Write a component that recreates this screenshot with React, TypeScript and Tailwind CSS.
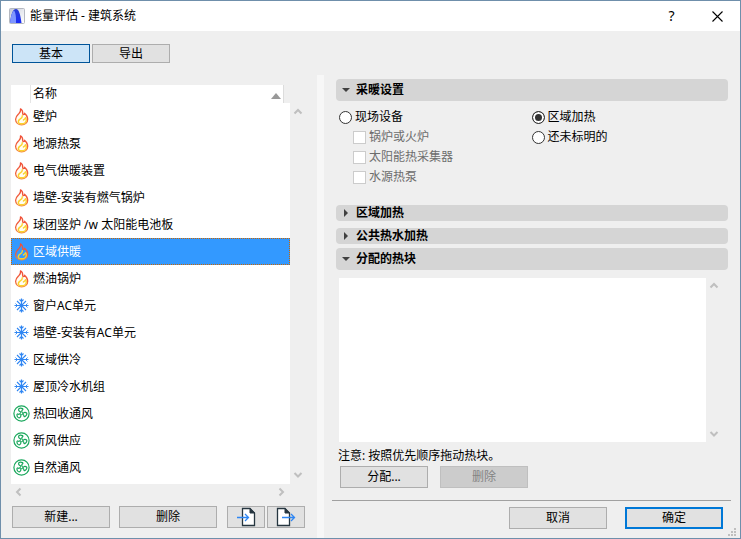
import type { ReactNode } from 'react';

type SystemKind = 'heating' | 'cooling' | 'ventilation';

const systems: { name: string; kind: SystemKind }[] = [
  { name: '壁炉', kind: 'heating' },
  { name: '地源热泵', kind: 'heating' },
  { name: '电气供暖装置', kind: 'heating' },
  { name: '墙壁-安装有燃气锅炉', kind: 'heating' },
  { name: '球团竖炉 /w 太阳能电池板', kind: 'heating' },
  { name: '区域供暖', kind: 'heating' },
  { name: '燃油锅炉', kind: 'heating' },
  { name: '窗户AC单元', kind: 'cooling' },
  { name: '墙壁-安装有AC单元', kind: 'cooling' },
  { name: '区域供冷', kind: 'cooling' },
  { name: '屋顶冷水机组', kind: 'cooling' },
  { name: '热回收通风', kind: 'ventilation' },
  { name: '新风供应', kind: 'ventilation' },
  { name: '自然通风', kind: 'ventilation' },
];

const selectedSystem = '区域供暖';

function AppIcon() {
  return (
    <svg width="16" height="16" viewBox="0 0 16 16" aria-hidden="true">
      <defs>
        <linearGradient id="app-bg" x1="0" y1="0" x2="1" y2="1">
          <stop offset="0" stopColor="#c2c8d4" />
          <stop offset="0.5" stopColor="#e6e8ee" />
          <stop offset="1" stopColor="#ffffff" />
        </linearGradient>
        <linearGradient id="app-arc" x1="0" y1="0" x2="0" y2="1">
          <stop offset="0" stopColor="#2a3fd6" />
          <stop offset="1" stopColor="#1a2cf5" />
        </linearGradient>
      </defs>
      <rect x="0.5" y="0.5" width="15" height="15" rx="1" fill="url(#app-bg)" stroke="#b4b8c0" />
      <path d="M1 15C2 7 3.500 1 7 1C10 1 11.500 7 12.500 15H6.500C6.500 10 6 7 5 5C4 8 3.500 12 3.200 15Z" fill="url(#app-arc)" />
      <path d="M1 15C1.800 9 2.800 4 5 2.500C7 5 7 10 7 15Z" fill="#7f96ff" />
    </svg>
  );
}

function FlameIcon({ filled }: { filled: boolean }) {
  return (
    <svg width="16" height="18" viewBox="0 0 16 18" fill="none" aria-hidden="true">
      <defs>
        <linearGradient id="flame" x1="0" y1="0" x2="0" y2="1">
          <stop offset="0" stopColor="#f04e37" />
          <stop offset="0.65" stopColor="#f0603c" />
          <stop offset="1" stopColor="#f58a3a" />
        </linearGradient>
      </defs>
      <path
        d="M7.500 0.800C9.300 2 9.900 3.600 9.700 5.600C9.800 6.400 10.200 6.700 10.800 6.500C11.300 6.300 11.500 5.800 11.500 5.200C13.400 6.800 14.700 8.800 14.700 11.200C14.700 14.700 12 16.900 8.600 16.900C5.200 16.900 2.600 14.700 2.600 11.300C2.600 8.600 4.300 7.200 5.900 5.600C7.200 4.300 7.800 2.700 7.500 0.800Z"
        fill={filled ? '#fffdf3' : 'none'}
        stroke="url(#flame)"
        strokeWidth="1.3"
        strokeLinejoin="round"
      />
      <path
        d="M9.300 7.800C9.600 9.400 8.400 10.200 7 11.100C5.200 12.300 4.900 13.500 5.700 15C6.500 15.600 7.600 15.800 8.600 15.800C11.200 15.800 13.100 14.500 13.300 12.300C13.400 11.200 13 10.300 12.500 9.700C12.200 11 11.400 11.500 10.400 12"
        stroke="#fbd22c"
        strokeWidth="1.4"
        strokeLinecap="round"
        strokeLinejoin="round"
      />
    </svg>
  );
}

function SnowflakeIcon() {
  return (
    <svg width="16" height="16" viewBox="0 0 16 16" fill="none" stroke="#2f86f3" strokeWidth="1.1" aria-hidden="true">
      <path d="M8.500 0.500V14.500M1.500 7.500H15.500" strokeWidth="1.2" />
      <path d="M4 3L13 12M13 3L4 12" />
      <path d="M6.500 1.500L8.500 3.500L10.500 1.500M6.500 13.500L8.500 11.500L10.500 13.500" />
      <path d="M2.500 5.500L4.500 7.500L2.500 9.500M14.500 5.500L12.500 7.500L14.500 9.500" strokeWidth="0.9" />
    </svg>
  );
}

function FanIcon() {
  const blade = 'M8 7C6.200 6.700 5.300 5.400 5.700 4.100C6.200 2.900 8 2.800 9.500 3.600C10.300 4.100 9.900 4.800 9.300 5.100C8.700 5.500 8.800 6.100 8.900 6.900';
  return (
    <svg width="17" height="17" viewBox="0 0 17 17" fill="none" stroke="#19a75c" aria-hidden="true">
      <circle cx="8.500" cy="8.500" r="7.600" strokeWidth="1.200" />
      <circle cx="8.500" cy="8.300" r="1.300" />
      <path d={blade} strokeWidth="1.200" />
      <path d={blade} strokeWidth="1.200" transform="rotate(120 8.500 8.300)" />
      <path d={blade} strokeWidth="1.200" transform="rotate(240 8.500 8.300)" />
    </svg>
  );
}

function SystemIcon({ kind, selected }: { kind: SystemKind; selected: boolean }) {
  if (kind === 'heating') return <FlameIcon filled={!selected} />;
  if (kind === 'cooling') return <SnowflakeIcon />;
  return <FanIcon />;
}

const arrowPaths = {
  up: 'M1.500 6.500L5 3L8.500 6.500',
  down: 'M1.500 3L5 6.500L8.500 3',
  left: 'M6.500 1.500L3 5L6.500 8.500',
  right: 'M3.500 1.500L7 5L3.500 8.500',
};

function ScrollArrow({ direction, label }: { direction: keyof typeof arrowPaths; label: string }) {
  return (
    <button type="button" aria-label={label} className="flex size-4 items-center justify-center">
      <svg width="10" height="10" viewBox="0 0 10 10" fill="none" stroke="#bfbfbf" strokeWidth="2">
        <path d={arrowPaths[direction]} />
      </svg>
    </button>
  );
}

function DocumentIcon({ direction }: { direction: 'in' | 'out' }) {
  return (
    <svg width="20" height="20" viewBox="0 0 20 20" fill="none" aria-hidden="true">
      {direction === 'in' ? (
        <>
          <path d="M6.500 1.500H14L18.500 6V18.500H6.500Z" fill="#fff" stroke="#263640" strokeWidth="1.300" />
          <path d="M14 1.500V6H18.500Z" fill="#263640" stroke="#263640" />
          <path d="M1 10.500H12.500M9 7L12.500 10.500L9 14" stroke="#2f86f3" strokeWidth="1.300" />
        </>
      ) : (
        <>
          <path d="M1.500 1.500H9L13.500 6V18.500H1.500Z" fill="#fff" stroke="#263640" strokeWidth="1.300" />
          <path d="M9 1.500V6H13.500Z" fill="#263640" stroke="#263640" />
          <path d="M6 10.500H18.500M15 7L18.500 10.500L15 14" stroke="#2f86f3" strokeWidth="1.300" />
        </>
      )}
    </svg>
  );
}

function PushButton({ children, className, label }: { children: ReactNode; className: string; label?: string }) {
  return (
    <button
      type="button"
      aria-label={label}
      className={`flex h-[22px] items-center justify-center border border-[#adadad] bg-[#e1e1e1] ${className}`}
    >
      {children}
    </button>
  );
}

function SectionHeader({ title, open, className }: { title: string; open?: boolean; className: string }) {
  return (
    <button
      type="button"
      aria-expanded={!!open}
      className={`flex w-full items-center gap-1 rounded-sm bg-[#d5d5d5] pl-1 text-left font-bold ${className}`}
    >
      <svg width="12" height="12" viewBox="0 0 12 12" fill="#404040" aria-hidden="true">
        <path d={open ? 'M2 4H10L6 8Z' : 'M4 2V10L8 6Z'} />
      </svg>
      {title}
    </button>
  );
}

function RadioOption({ label, checked }: { label: string; checked?: boolean }) {
  return (
    <label className="flex h-5 items-center gap-[3px]">
      <input
        type="radio"
        name="equipment"
        defaultChecked={checked}
        className="size-[13px] appearance-none rounded-full border border-[#333] bg-white checked:bg-[#333] checked:shadow-[inset_0_0_0_2px_#fff]"
      />
      {label}
    </label>
  );
}

function DisabledCheck({ label }: { label: string }) {
  return (
    <label className="flex h-5 items-center gap-[3px] text-[#6d6d6d]">
      <input type="checkbox" disabled className="size-[13px] appearance-none border border-[#cccccc] bg-white" />
      {label}
    </label>
  );
}

function SystemsPane() {
  return (
    <div className="flex w-[316px] shrink-0 flex-col pr-[11px] pb-[10px] pl-[10px]">
      <div className="flex gap-[2px] pt-[13px] pl-px">
        <button type="button" className="h-[19px] w-[78px] border border-[#005499] bg-[#cce4f7]">
          基本
        </button>
        <button type="button" className="h-[19px] w-[78px] border border-[#adadad] bg-[#e1e1e1]">
          导出
        </button>
      </div>

      <div className="mt-[22px] flex flex-1">
        <div className="flex flex-1 flex-col">
          <div className="mr-[6px] flex h-[18px] items-center border-r border-[#dcdcdc] bg-white">
            <span className="h-full w-5 border-r border-[#e5e5e5]" />
            <span className="flex-1 pl-[2px]">名称</span>
            <svg width="10" height="6" viewBox="0 0 10 6" fill="#999" className="mr-[2px] mt-1" aria-hidden="true">
              <path d="M0 6L5 0L10 6Z" />
            </svg>
          </div>
          <ul role="listbox" aria-label="建筑系统" className="flex-1 bg-white">
            {systems.map((system) => {
              const selected = system.name === selectedSystem;
              return (
                <li
                  key={system.name}
                  role="option"
                  aria-selected={selected}
                  className={
                    selected
                      ? 'flex h-[27px] items-center border border-dotted border-[#cc6600] bg-[#3399ff] pl-px text-white'
                      : 'flex h-[27px] items-center pl-[2px]'
                  }
                >
                  <span className="flex w-5 justify-start">
                    <SystemIcon kind={system.kind} selected={selected} />
                  </span>
                  {system.name}
                </li>
              );
            })}
          </ul>
          <div className="flex h-4 justify-between pr-px">
            <ScrollArrow direction="left" label="向左滚动" />
            <ScrollArrow direction="right" label="向右滚动" />
          </div>
        </div>
        <div className="flex w-4 flex-col justify-between pt-[19px] pb-[17px]">
          <ScrollArrow direction="up" label="向上滚动" />
          <ScrollArrow direction="down" label="向下滚动" />
        </div>
      </div>

      <div className="mt-[6px] flex pl-px">
        <PushButton className="w-[98px]">新建...</PushButton>
        <PushButton className="ml-[9px] w-[98px]">删除</PushButton>
        <PushButton className="ml-[10px] w-[38px]" label="导入">
          <DocumentIcon direction="in" />
        </PushButton>
        <PushButton className="ml-[2px] w-[38px]" label="导出文件">
          <DocumentIcon direction="out" />
        </PushButton>
      </div>
    </div>
  );
}

function SettingsPane() {
  return (
    <div className="flex flex-1 flex-col pt-[48px] pr-3 pb-[9px] pl-3">
      <SectionHeader title="采暖设置" open className="h-[22px]" />
      <div className="grid grid-cols-2 pt-[6px] pr-1 pl-[3px]">
        <div>
          <RadioOption label="现场设备" checked={false} />
          <div className="pl-[14px]">
            <DisabledCheck label="锅炉或火炉" />
            <DisabledCheck label="太阳能热采集器" />
            <DisabledCheck label="水源热泵" />
          </div>
        </div>
        <div>
          <RadioOption label="区域加热" checked />
          <RadioOption label="还未标明的" />
        </div>
      </div>

      <SectionHeader title="区域加热" className="mt-[18px] h-4" />
      <SectionHeader title="公共热水加热" className="mt-[7px] h-4" />
      <SectionHeader title="分配的热块" open className="mt-1 h-[22px]" />

      <div className="mt-2 flex flex-1 pl-[3px]">
        <div className="flex-1 bg-white" />
        <div className="mr-[6px] flex w-4 flex-col justify-between">
          <ScrollArrow direction="up" label="热块向上滚动" />
          <ScrollArrow direction="down" label="热块向下滚动" />
        </div>
      </div>

      <p className="mt-1 pl-[2px] leading-5">注意: 按照优先顺序拖动热块。</p>
      <div className="flex gap-3 pl-1">
        <PushButton className="w-[88px]">分配...</PushButton>
        <button type="button" disabled className="h-[22px] w-[88px] border border-[#bfbfbf] bg-[#cccccc] text-[#838383]">
          删除
        </button>
      </div>

      <hr className="-mr-[3px] -ml-1 mt-3 border-t border-[#a0a0a0]" />
      <div className="mt-[6px] flex justify-end gap-[18px] pr-[5px]">
        <PushButton className="w-[98px]">取消</PushButton>
        <button type="submit" className="h-[22px] w-[98px] border-2 border-[#0078d7] bg-[#e1e1e1]">
          确定
        </button>
      </div>
    </div>
  );
}

export default function App() {
  return (
    <main className="relative flex min-h-screen flex-col border border-[#6f8fab] bg-[#efefef] font-['Noto_Sans','Noto_Sans_CJK_SC',sans-serif] text-[12px] leading-4 text-black">
      <header className="flex h-[30px] items-center bg-white pl-2">
        <AppIcon />
        <h1 className="flex-1 pl-[5px]">能量评估 - 建筑系统</h1>
        <button type="button" aria-label="帮助" className="h-full w-[45px] text-sm">
          ?
        </button>
        <button type="button" aria-label="关闭" className="flex h-full w-[46px] items-center justify-center">
          <svg width="11" height="11" viewBox="0 0 11 11" stroke="#000" strokeWidth="1.100">
            <path d="M0.500 0.500L10.500 10.500M10.500 0.500L0.500 10.500" />
          </svg>
        </button>
      </header>
      <div className="flex flex-1">
        <SystemsPane />
        <div className="mt-11 w-[7px] bg-[#f7f7f7]" />
        <SettingsPane />
      </div>
      <svg width="8" height="8" viewBox="0 0 8 8" fill="#bfbfbf" className="absolute right-1 bottom-[2px]" aria-hidden="true">
        <path d="M6 0h2v2h-2zM3 3h2v2h-2zM6 3h2v2h-2zM0 6h2v2h-2zM3 6h2v2h-2zM6 6h2v2h-2z" />
      </svg>
    </main>
  );
}
